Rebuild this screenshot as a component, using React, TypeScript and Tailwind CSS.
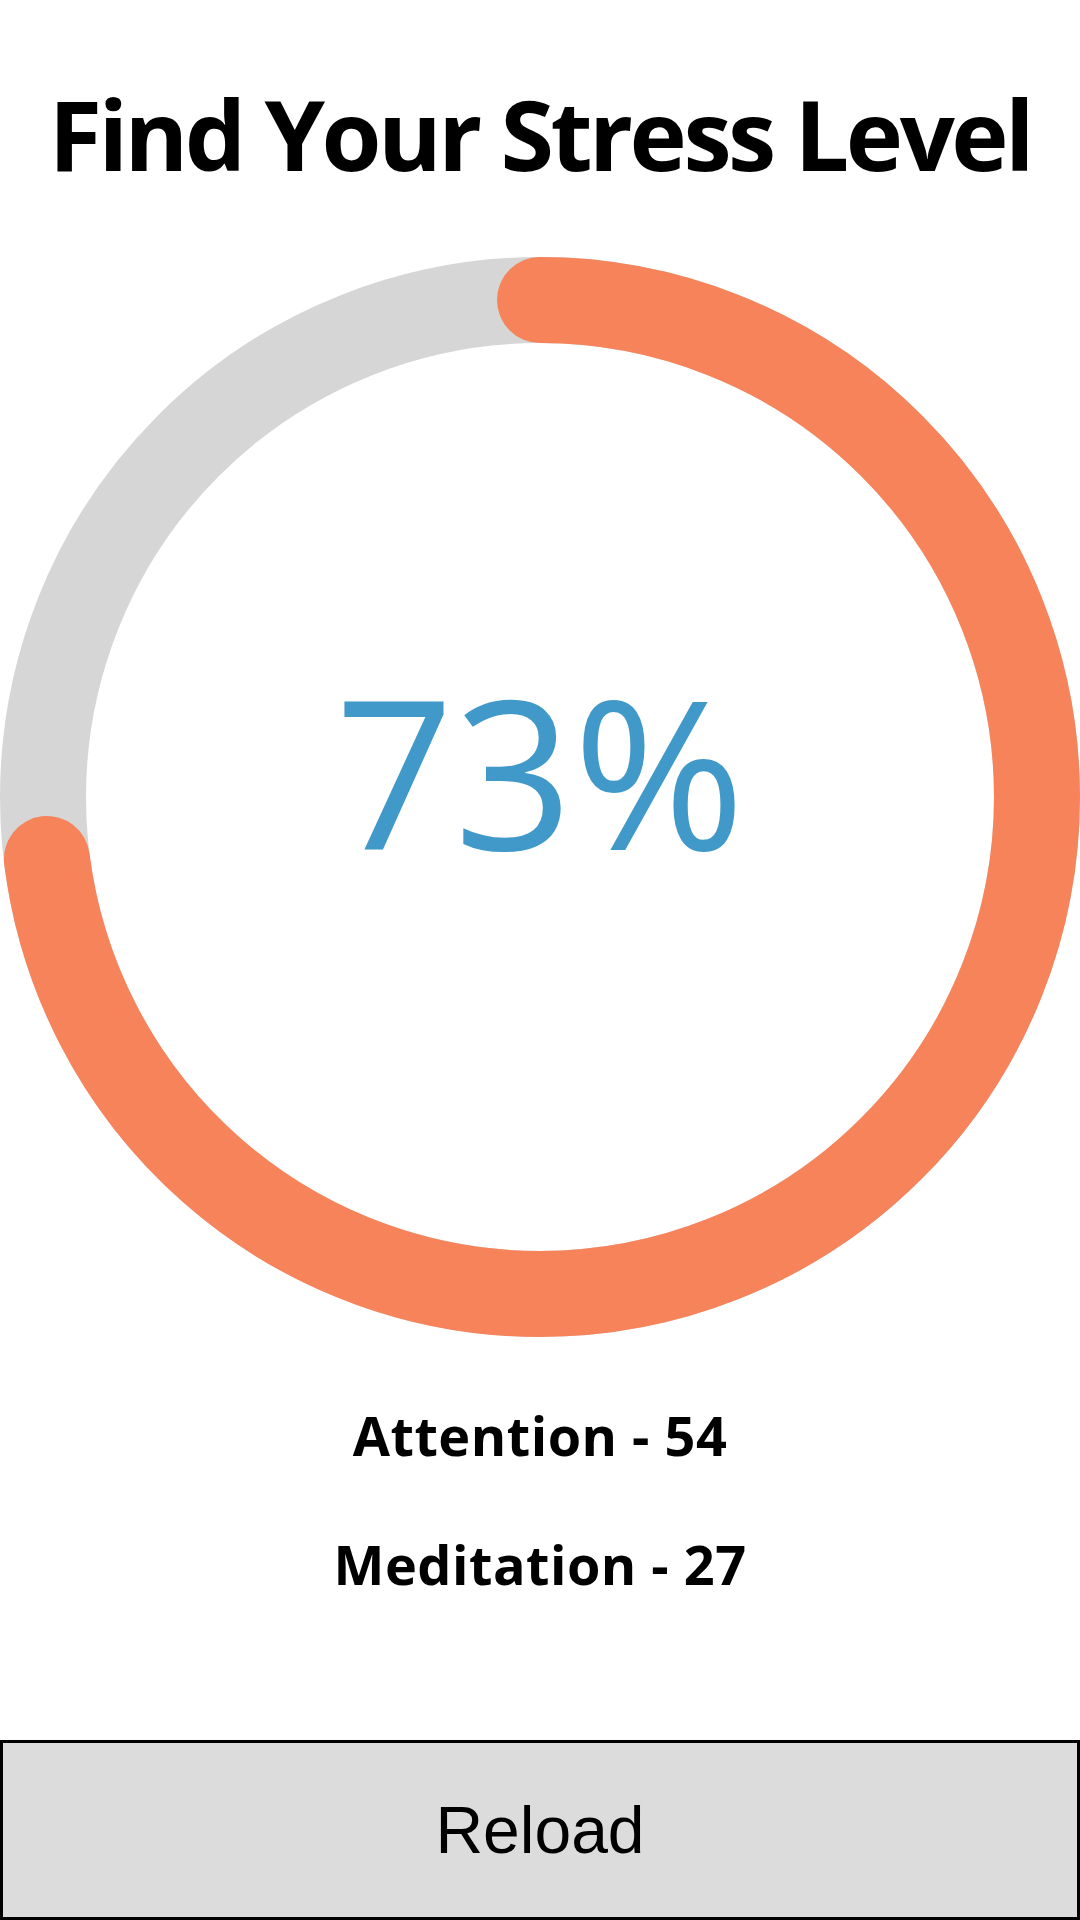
import React from "react";

export default function App() {
  const r = 497;
  const c = 2 * Math.PI * r;
  const pct = 73;
  return (
    <div className="w-[1080px] h-[1920px] bg-white flex flex-col items-center overflow-hidden" style={{ fontFamily: '"Open Sans", "Noto Sans", sans-serif' }}>
      <h1 className="mt-[85px] text-[97px] leading-none font-bold text-black tracking-[-3.5px] whitespace-nowrap">Find Your Stress Level</h1>
      <div className="relative mt-[75px] w-[1080px] h-[1080px] shrink-0">
        <svg width="1080" height="1080" viewBox="0 0 1080 1080">
          <circle cx="540" cy="540" r={r} fill="none" stroke="#D6D6D6" strokeWidth="86" />
          <circle
            cx="540"
            cy="540"
            r={r}
            fill="none"
            stroke="#F7835B"
            strokeWidth="86"
            strokeLinecap="round"
            strokeDasharray={`${(c * pct) / 100} ${c}`}
            transform="rotate(-90 540 540)"
          />
        </svg>
        <div className="absolute inset-0 flex items-center justify-center">
          <span className="text-[208px] leading-none text-[#4199C9] mt-[-54px]">73%</span>
        </div>
      </div>
      <div className="mt-[71px] text-[54px] leading-none font-bold text-black tracking-[0.5px]">Attention - 54</div>
      <div className="mt-[75px] text-[54px] leading-none font-bold text-black tracking-[0.5px]">Meditation - 27</div>
      <button className="mt-auto w-full h-[180px] bg-[#DCDCDC] border-[3px] border-black flex items-center justify-center">
        <span className="text-[66px] text-black" style={{ fontFamily: '"Liberation Sans", Arial, sans-serif' }}>Reload</span>
      </button>
    </div>
  );
}
